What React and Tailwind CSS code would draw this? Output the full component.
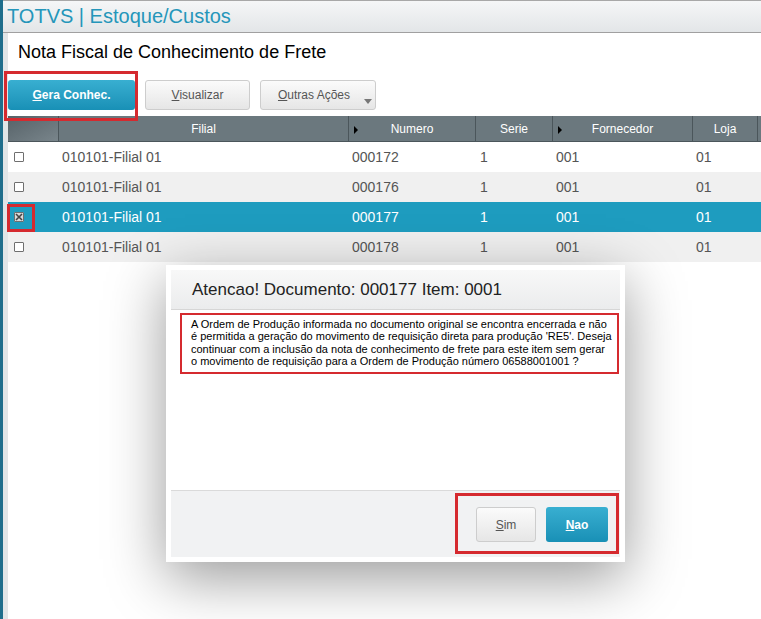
import React from 'react';

const rows = [
  { filial: '010101-Filial 01', numero: '000172', serie: '1', fornecedor: '001', loja: '01', bg: 'bg-white' },
  { filial: '010101-Filial 01', numero: '000176', serie: '1', fornecedor: '001', loja: '01', bg: 'bg-[#f0f0f0]' },
  { filial: '010101-Filial 01', numero: '000177', serie: '1', fornecedor: '001', loja: '01', bg: 'bg-[#1e9cbf]', selected: true },
  { filial: '010101-Filial 01', numero: '000178', serie: '1', fornecedor: '001', loja: '01', bg: 'bg-[#f0f0f0]' },
];

const message = [
  'A Ordem de Produção informada no documento original se encontra encerrada e não',
  "é permitida a geração do movimento de requisição direta para produção 'RE5'. Deseja",
  'continuar com a inclusão da nota de conhecimento de frete para este item sem gerar',
  'o movimento de requisição para a Ordem de Produção número 06588001001 ?',
];

const SortMark = () => (
  <span className="absolute left-[5px] top-[10px] h-0 w-0 border-y-[4px] border-l-[4px] border-y-transparent border-l-black" />
);

const Checkbox = ({ checked }) => (
  <span className="flex h-[10px] w-[10px] items-center justify-center rounded-[1px] border border-[#6f6f6f] bg-white">
    {checked && (
      <svg width="8" height="8" viewBox="0 0 8 8">
        <rect x="0" y="0" width="8" height="8" fill="#d9d9d9" />
        <path d="M1 1 L7 7 M7 1 L1 7" stroke="#444" strokeWidth="1.6" />
      </svg>
    )}
  </span>
);

const App = () => {
  return (
    <div className="relative h-[619px] w-[761px] overflow-hidden bg-white font-['Liberation_Sans',Arial,sans-serif]">
      <div className="flex h-full">
        {/* left accent bar */}
        <div className="w-[3px] shrink-0 bg-[#1f6e8c]" />

        <div className="flex min-w-0 flex-1 flex-col">
          {/* app title bar */}
          <header className="flex h-[33px] shrink-0 items-center border-y border-t-[#a8a8a8] border-b-[#a0a0a0] bg-gradient-to-b from-[#f5f6f7] to-[#e3e6e8] pb-[2px] pl-[4px]">
            <span className="text-[20px] leading-none text-[#2596ba]">TOTVS | Estoque/Custos</span>
          </header>

          <div className="flex flex-1">
            <div className="w-[5px] shrink-0 bg-[#e1e5e7]" />

            <main className="min-w-0 flex-1">
              <h1 className="pl-[10px] pt-[9px] text-[18px] leading-[21px] text-black">
                Nota Fiscal de Conhecimento de Frete
              </h1>

              {/* toolbar */}
              <div className="mt-[17px] flex gap-[10px]">
                <button className="h-[30px] w-[127px] rounded-[3px] bg-gradient-to-b from-[#38afd1] to-[#1890b6] text-[12px] font-bold text-white">
                  <span className="underline">G</span>era Conhec.
                </button>
                <button className="h-[30px] w-[105px] rounded-[3px] border border-[#cdcdcd] bg-gradient-to-b from-[#fbfbfb] to-[#e6e6e6] text-[12px] text-[#555]">
                  <span className="underline">V</span>isualizar
                </button>
                <button className="relative h-[30px] w-[116px] rounded-[3px] border border-[#cdcdcd] bg-gradient-to-b from-[#fbfbfb] to-[#e6e6e6] pr-[8px] text-[12px] text-[#555]">
                  <span className="underline">O</span>utras Ações
                  <span className="absolute bottom-[5px] right-[3px] h-0 w-0 border-x-[4px] border-t-[5px] border-x-transparent border-t-[#777]" />
                </button>
              </div>

              {/* grid */}
              <div className="mt-[6px]">
                <div className="flex h-[26px] border-b border-[#4b565b] bg-[#6b787e] text-[12px] text-white">
                  <div className="w-[51px] shrink-0 border-r border-[#4b565b] bg-gradient-to-br from-[#566268] to-[#79858b]" />
                  <div className="flex w-[290px] shrink-0 items-center justify-center border-r border-[#4b565b]">Filial</div>
                  <div className="relative flex w-[127px] shrink-0 items-center justify-center border-r border-[#4b565b]">
                    <SortMark />Numero
                  </div>
                  <div className="flex w-[77px] shrink-0 items-center justify-center border-r border-[#4b565b]">Serie</div>
                  <div className="relative flex w-[140px] shrink-0 items-center justify-center border-r border-[#4b565b]">
                    <SortMark />Fornecedor
                  </div>
                  <div className="flex w-[65px] shrink-0 items-center justify-center border-r border-[#4b565b]">Loja</div>
                  <div className="flex-1" />
                </div>

                {rows.map((r) => (
                  <div
                    key={r.numero}
                    className={`flex h-[30px] items-center text-[14px] ${r.bg} ${r.selected ? 'text-white' : 'text-[#555]'}`}
                  >
                    <div className="flex w-[51px] shrink-0 pl-[6px]">
                      <Checkbox checked={r.selected} />
                    </div>
                    <div className="w-[290px] shrink-0 pl-[3px]">{r.filial}</div>
                    <div className="w-[127px] shrink-0 pl-[3px]">{r.numero}</div>
                    <div className="w-[77px] shrink-0 pl-[4px]">{r.serie}</div>
                    <div className="w-[140px] shrink-0 pl-[3px]">{r.fornecedor}</div>
                    <div className="w-[65px] shrink-0 pl-[3px]">{r.loja}</div>
                  </div>
                ))}
              </div>
            </main>
          </div>
        </div>
      </div>

      {/* highlight frames */}
      <div className="pointer-events-none absolute left-[4px] top-[71px] h-[50px] w-[134px] border-[3px] border-[#d52a2f]" />
      <div className="pointer-events-none absolute left-[7px] top-[204px] h-[28px] w-[28px] border-[3px] border-[#d52a2f]" />

      {/* confirmation dialog */}
      <div className="absolute left-[166px] top-[265px] flex h-[297px] w-[459px] flex-col bg-white p-[5px] shadow-[0_16px_55px_rgba(0,0,0,0.4)]">
        <div className="flex h-[40px] shrink-0 items-center border-b border-[#d6d6d6] bg-gradient-to-b from-[#f8f8f8] to-[#ebeced] pl-[21px]">
          <span className="text-[17px] text-[#222]">Atencao! Documento: 000177 Item: 0001</span>
        </div>

        <div className="ml-[9px] mr-px mt-[3px] h-[61px] border-2 border-[#d52a2f] pl-[9px] pt-[3px] text-[11px] leading-[12.4px] whitespace-nowrap text-black">
          {message.map((line) => (
            <div key={line}>{line}</div>
          ))}
        </div>

        <div className="relative mt-auto flex h-[67px] shrink-0 justify-end gap-[10px] border-t border-[#dadada] bg-[#f1f2f3] pr-[12px] pt-[16px]">
          <button className="h-[35px] w-[60px] rounded-[3px] border border-[#cdcdcd] bg-gradient-to-b from-[#fbfbfb] to-[#e6e6e6] text-[12px] text-[#555]">
            <span className="underline">S</span>im
          </button>
          <button className="h-[35px] w-[62px] rounded-[3px] bg-gradient-to-b from-[#38afd1] to-[#1890b6] text-[12px] font-bold text-white">
            <span className="underline">N</span>ao
          </button>
          <div className="pointer-events-none absolute left-[284px] top-[2px] h-[61px] w-[164px] border-[3px] border-[#d52a2f]" />
        </div>
      </div>
    </div>
  );
};

export default App;
